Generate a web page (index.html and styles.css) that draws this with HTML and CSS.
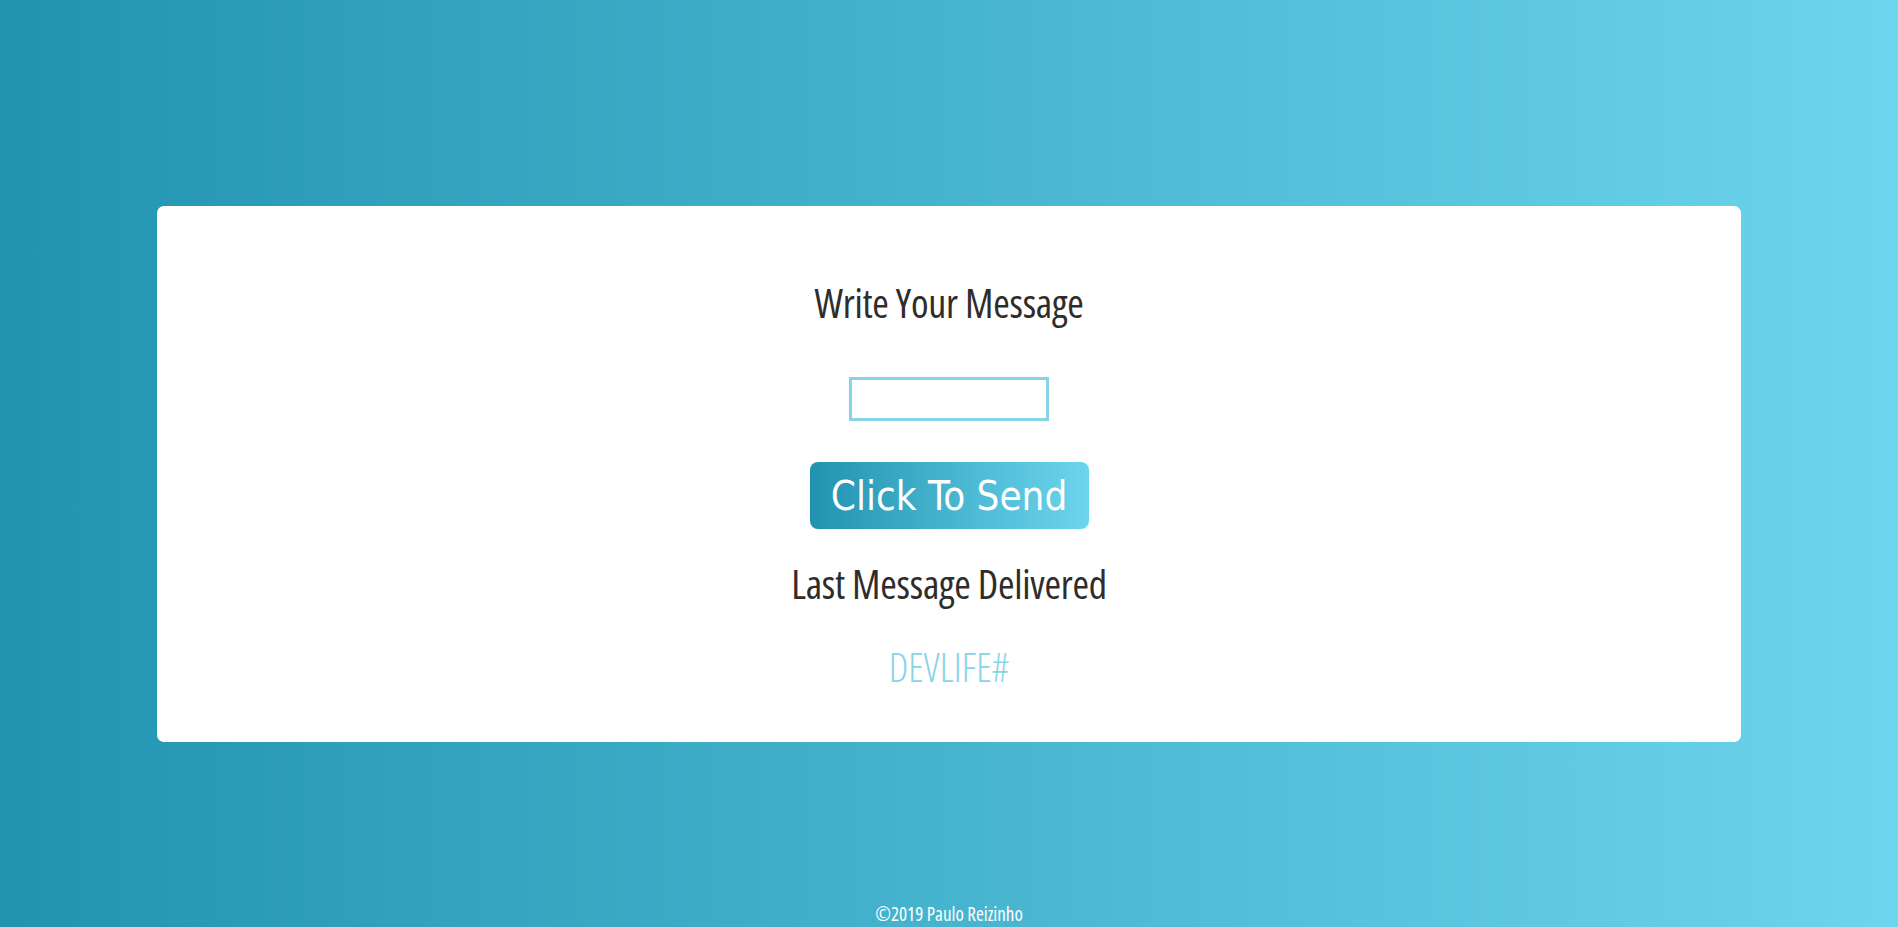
FILE: index.html
```html
<!DOCTYPE html>
<html lang="en">
<head>
<meta charset="utf-8">
<title>Message</title>
<link rel="stylesheet" href="styles.css">
</head>
<body>
<div class="page">
  <main class="card">
    <h1 class="title">Write Your Message</h1>
    <input class="msg-input" type="text">
    <button class="send-btn">Click To Send</button>
    <h2 class="title sub">Last Message Delivered</h2>
    <p class="last">DEVLIFE#</p>
  </main>
  <footer class="footer">©2019 Paulo Reizinho</footer>
</div>
</body>
</html>
```
FILE: styles.css
```css
html, body {
  margin: 0;
  padding: 0;
  height: 100%;
}
body {
  background: linear-gradient(to right, #2193b0, #6dd5ed);
  font-family: "Open Sans", "DejaVu Sans Condensed", sans-serif;
  font-stretch: 75%;
  overflow: hidden;
}
.page {
  height: 927px;
  display: flex;
  flex-direction: column;
  align-items: center;
  box-sizing: border-box;
  padding-top: 206px;
}
.card {
  width: 1584px;
  height: 536px;
  box-sizing: border-box;
  background: #fff;
  border-radius: 7px;
  display: flex;
  flex-direction: column;
  align-items: center;
  padding-top: 72px;
}
.title {
  margin: 0;
  font-size: 40px;
  font-weight: 400;
  letter-spacing: -0.25px;
  color: #302c2c;
  line-height: 50px;
}
.msg-input {
  margin-top: 49px;
  width: 200px;
  height: 44px;
  box-sizing: border-box;
  border: 3px solid #87d4e8;
  outline: none;
  padding: 0;
}
.send-btn {
  margin-top: 41px;
  width: 279px;
  height: 67px;
  border: none;
  border-radius: 8px;
  background: linear-gradient(to right, #2193b0, #6dd5ed);
  color: #fff;
  font-family: "DejaVu Sans Condensed", "DejaVu Sans", sans-serif;
  font-stretch: normal;
  font-size: 40px;
  padding: 0;
  cursor: pointer;
}
.sub {
  margin-top: 30px;
}
.last {
  margin: 33px 0 0;
  font-size: 40px;
  line-height: 50px;
  font-weight: 300;
  color: #87d4e8;
}
.footer {
  margin-top: auto;
  color: #fff;
  font-size: 19px;
  line-height: 26px;
  padding-bottom: 0;
}
```
